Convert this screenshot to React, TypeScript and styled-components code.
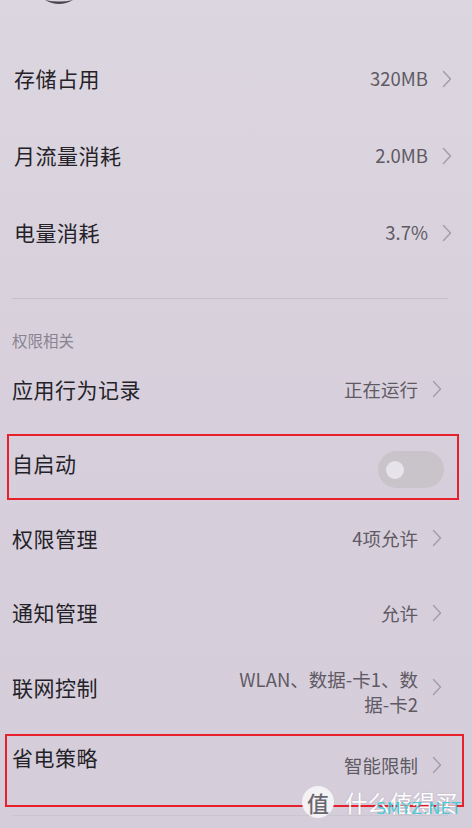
import React from 'react';
import styled, { createGlobalStyle } from 'styled-components';

const GlobalStyle = createGlobalStyle`
    html, body {
        margin: 0;
        padding: 0;
        background: #d8d2dc;
    }
    body {
        font-family: "Noto Sans CJK SC", "Noto Sans", sans-serif;
    }
`

interface Item {
    label: string;
    value?: string;
    lines?: string[];
    toggle?: boolean;
    highlight?: boolean;
}

const usage: Item[] = [
    { label: '存储占用', value: '320MB' },
    { label: '月流量消耗', value: '2.0MB' },
    { label: '电量消耗', value: '3.7%' },
];

const permissions: Item[] = [
    { label: '应用行为记录', value: '正在运行' },
    { label: '自启动', toggle: true, highlight: true },
    { label: '权限管理', value: '4项允许' },
    { label: '通知管理', value: '允许' },
    { label: '联网控制', lines: ['WLAN、数据-卡1、数', '据-卡2'] },
    { label: '省电策略', value: '智能限制', highlight: true },
];

const Chevron = () => (
    <ChevronSvg viewBox="0 0 10 18" width="10" height="18">
        <path d="M1.5 1.5 L8.5 9 L1.5 16.5" fill="none" stroke="#a39da8" strokeWidth="1.4" strokeLinecap="round" strokeLinejoin="round" />
    </ChevronSvg>
);

const SettingRow: React.FC<{ item: Item; tall?: boolean; last?: boolean }> = ({ item, tall, last }) => (
    <Row tall={tall} last={last}>
        <Label>{item.label}</Label>
        {item.toggle ? (
            <Toggle>
                <Knob />
            </Toggle>
        ) : (
            <Trailing last={last}>
                {item.lines ? (
                    <MultiValue>
                        {item.lines.map((l) => <span key={l}>{l}</span>)}
                    </MultiValue>
                ) : (
                    <Value>{item.value}</Value>
                )}
                <Chevron />
            </Trailing>
        )}
        {item.highlight && <Marker last={last} />}
    </Row>
);

const App: React.FC = () => {
    return (
        <>
            <GlobalStyle />
            <Page>
                <TopIcon viewBox="0 0 30 6" width="30" height="6">
                    <path d="M1 0 Q15 8 29 0 Q15 3 1 0 Z" fill="#4a4650" />
                </TopIcon>
                <Section right={20} left={14}>
                    {usage.map((item) => <SettingRow key={item.label} item={item} tall />)}
                </Section>
                <Divider />
                <SectionTitle>权限相关</SectionTitle>
                <Section right={30} left={12}>
                    {permissions.map((item, i) => (
                        <SettingRow key={item.label} item={item} last={i === permissions.length - 1} />
                    ))}
                </Section>
                <BottomLine />
                <Watermark>
                    <LogoCircle>值</LogoCircle>
                    <Brand>什么值得买</Brand>
                    <Site>SMYZ.NET</Site>
                </Watermark>
            </Page>
        </>
    );
};

export default App;

const Page = styled.div`
    position: relative;
    width: 472px;
    height: 828px;
    overflow: hidden;
    background: linear-gradient(180deg, #dcd6e0 0%, #d7d0dc 50%, #d5cdda 100%);
    display: flex;
    flex-direction: column;
`

const TopIcon = styled.svg`
    display: block;
    margin-left: 44px;
    flex-shrink: 0;
`

const Section = styled.div<{ right: number; left: number }>`
    display: flex;
    flex-direction: column;
    padding: 0 ${(p) => p.right}px 0 ${(p) => p.left}px;
`

const Row = styled.div<{ tall?: boolean; last?: boolean }>`
    position: relative;
    display: flex;
    align-items: ${(p) => (p.last ? 'flex-start' : 'center')};
    justify-content: space-between;
    height: ${(p) => (p.tall ? 77 : 74.5)}px;
    padding-top: ${(p) => (p.last ? 22 : 0)}px;
    box-sizing: border-box;
    &:first-child {
        margin-top: ${(p) => (p.tall ? 34 : 0)}px;
    }
`

const Label = styled.div`
    font-size: 21px;
    color: #242228;
    letter-spacing: 0.5px;
    line-height: 1;
`

const Trailing = styled.div<{ last?: boolean }>`
    display: flex;
    align-items: center;
    gap: 14px;
    margin-top: ${(p) => (p.last ? 9 : 0)}px;
`

const Value = styled.div`
    font-size: 18.5px;
    color: #5f5a64;
    line-height: 1;
`

const MultiValue = styled.div`
    display: flex;
    flex-direction: column;
    align-items: flex-end;
    font-size: 18.5px;
    color: #5f5a64;
    line-height: 25px;
    margin-top: 10px;
`

const ChevronSvg = styled.svg`
    display: block;
    flex-shrink: 0;
`

const Toggle = styled.div`
    position: relative;
    width: 66px;
    height: 37px;
    border-radius: 19px;
    background: #c9c4c9;
    margin-right: -2px;
    margin-top: 12px;
    display: flex;
    align-items: center;
    padding-left: 8px;
    box-sizing: border-box;
`

const Knob = styled.div`
    width: 18px;
    height: 18px;
    border-radius: 50%;
    background: #e7e3ea;
`

const Marker = styled.div<{ last?: boolean }>`
    position: absolute;
    left: ${(p) => (p.last ? -7 : -5)}px;
    right: ${(p) => (p.last ? -22 : -17)}px;
    top: ${(p) => (p.last ? 9 : 7)}px;
    bottom: ${(p) => (p.last ? -8 : 1)}px;
    border: 2px solid #e8202c;
    pointer-events: none;
`

const Divider = styled.div`
    height: 1px;
    margin: 27px 24px 0 12px;
    background: #c6c0ca;
`

const SectionTitle = styled.div`
    height: 53px;
    padding: 31px 0 0 12px;
    box-sizing: border-box;
    font-size: 15.5px;
    color: #8a8490;
    line-height: 20px;
`

const BottomLine = styled.div`
    height: 1px;
    margin: 16px 24px 0 12px;
    background: #cbc5cf;
`

const Watermark = styled.div`
    position: absolute;
    left: 302px;
    top: 785px;
    width: 170px;
    height: 34px;
    display: flex;
    align-items: center;
    gap: 11px;
`

const LogoCircle = styled.div`
    width: 32px;
    height: 32px;
    border-radius: 50%;
    background: #f4f2f5;
    color: #6a6670;
    font-size: 22px;
    line-height: 32px;
    text-align: center;
    font-weight: 500;
    flex-shrink: 0;
`

const Brand = styled.div`
    font-size: 22.5px;
    color: #ffffff;
    white-space: nowrap;
    text-shadow: 0 0 2px rgba(0, 0, 0, 0.15);
`

const Site = styled.div`
    position: absolute;
    left: 74px;
    top: 14px;
    font-family: "DejaVu Sans", sans-serif;
    font-size: 16px;
    color: #4cc8d6;
    letter-spacing: 0.5px;
`
